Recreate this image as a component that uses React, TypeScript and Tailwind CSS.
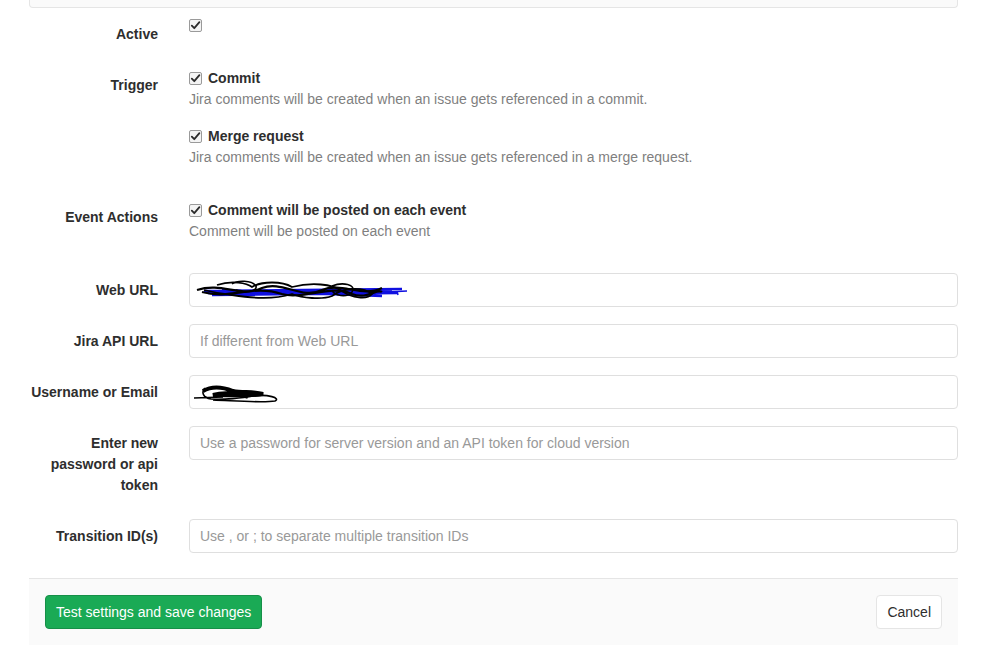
import React from "react";

const font = { fontFamily: "'Liberation Sans', Arial, sans-serif" };

function Check() {
  return (
    <span className="inline-flex items-center justify-center w-[13px] h-[13px] shrink-0 rounded-[2px] border border-[#9a9a9a] bg-[#f4f4f4]">
      <svg width="11" height="11" viewBox="0 0 11 11">
        <path d="M1.8 5.6 L4.3 8.2 L9.4 2.2" fill="none" stroke="#2b2b2b" strokeWidth="1.8" strokeLinecap="round" strokeLinejoin="round" />
      </svg>
    </span>
  );
}

function Label({ children, wide, className }: { children: React.ReactNode; wide?: boolean; className?: string }) {
  return (
    <div
      className={
        "w-[129px] shrink-0 text-right font-bold text-[14px] leading-[21px] text-[#2e2e2e] " +
        (wide ? "pl-0 " : "pl-[13px] ") +
        (className ?? "pt-[7px]")
      }
    >
      {children}
    </div>
  );
}

function CheckOption({ title, help }: { title?: string; help?: string }) {
  return (
    <div>
      <div className="flex items-center gap-[6px] h-[21px]">
        <Check />
        {title && <span className="font-bold text-[14px] text-[#2e2e2e]">{title}</span>}
      </div>
      {help && <div className="text-[14px] leading-[21px] text-[#7f7f7f]">{help}</div>}
    </div>
  );
}

function Field({ label, placeholder, children, className, wide }: { label: React.ReactNode; placeholder?: string; children?: React.ReactNode; className?: string; wide?: boolean }) {
  return (
    <div className={"flex gap-[31px] " + (className ?? "")}>
      <Label wide={wide}>{label}</Label>
      <div className="relative flex-1 h-[34px] rounded-[4px] border border-[#dfdfdf] bg-white flex items-center px-[10px]">
        {placeholder && <span className="text-[14px] text-[#999]">{placeholder}</span>}
        {children}
      </div>
    </div>
  );
}

function UrlScribble() {
  return (
    <svg width="230" height="26" viewBox="0 0 230 26" className="absolute left-[2px] top-[4px]">
      <path d="M12 13 L210 11 M16 15 L200 13 M20 17 L205 15 M30 12 L190 18" stroke="#1010e0" strokeWidth="2.5" fill="none" />
      <path d="M5 12 C30 4 50 20 70 10 C90 2 110 22 130 12 C150 4 170 20 190 10 M10 14 C40 22 60 6 90 16 C110 22 140 6 160 16 C175 22 185 10 190 14"
        stroke="#000" strokeWidth="2.2" fill="none" />
      <path d="M25 7 C40 2 55 5 60 9 C70 3 90 3 100 9 C120 4 140 6 150 13 C160 20 175 22 180 16 C170 8 150 10 140 18 C130 22 110 20 100 16 C80 22 60 20 40 17 C30 16 20 14 12 12"
        stroke="#000" strokeWidth="1.8" fill="none" />
      <path d="M40 6 C45 2 60 2 64 8 C66 14 50 16 44 12 M140 8 C150 4 165 6 160 14 C155 20 142 18 140 12" stroke="#000" strokeWidth="1.6" fill="none" />
      <path d="M195 14 L215 13 M205 13 L206 17" stroke="#1010e0" strokeWidth="1.5" fill="none" />
    </svg>
  );
}

function UserScribble() {
  return (
    <svg width="95" height="22" viewBox="0 0 95 22" className="absolute left-[3px] top-[6px]">
      <path d="M1 16 L30 15 M12 6 C8 10 10 16 18 17 C30 18 50 16 60 14 C75 12 88 16 82 19 C70 21 45 19 20 18" stroke="#000" strokeWidth="1.6" fill="none" />
      <path d="M10 9 C20 3 30 5 40 9 C50 11 60 9 70 12 C60 14 40 13 20 13 C30 10 45 11 55 15" stroke="#000" strokeWidth="4" fill="none" />
    </svg>
  );
}

export default function App() {
  return (
    <div className="bg-white w-[995px] h-[663px] overflow-hidden" style={font}>
      <div className="ml-[29px] w-[929px]">
        <div className="h-[8px] bg-[#fafafa] border-x border-b border-[#e5e5e5] rounded-b-[4px]" />

        <div className="flex gap-[31px] mt-[7px]">
          <Label className="pt-[9px] pb-[-2px] h-[28px]">Active</Label>
          <CheckOption />
        </div>

        <div className="flex gap-[31px] mt-[25px]">
          <Label>Trigger</Label>
          <div className="flex flex-col gap-[16px]">
            <CheckOption title="Commit" help="Jira comments will be created when an issue gets referenced in a commit." />
            <CheckOption title="Merge request" help="Jira comments will be created when an issue gets referenced in a merge request." />
          </div>
        </div>

        <div className="flex gap-[31px] mt-[32px]">
          <Label>Event Actions</Label>
          <CheckOption title="Comment will be posted on each event" help="Comment will be posted on each event" />
        </div>

        <Field label="Web URL" className="mt-[31px]">
          <UrlScribble />
        </Field>
        <Field label="Jira API URL" placeholder="If different from Web URL" className="mt-[17px]" />
        <Field label="Username or Email" className="mt-[17px]" wide>
          <UserScribble />
        </Field>
        <div className="flex gap-[31px] mt-[17px]">
          <Label>Enter new password or api token</Label>
          <div className="flex-1 h-[34px] rounded-[4px] border border-[#dfdfdf] bg-white flex items-center px-[10px]">
            <span className="text-[14px] text-[#999]">Use a password for server version and an API token for cloud version</span>
          </div>
        </div>
        <Field label="Transition ID(s)" placeholder="Use , or ; to separate multiple transition IDs" className="mt-[23px]" />

        <div className="mt-[25px] h-[67px] bg-[#fafafa] border-t border-[#e5e5e5] flex items-center justify-between px-[16px]">
          <button className="h-[34px] px-[10px] rounded-[4px] bg-[#1aaa55] border border-[#168f48] text-white text-[14px]">
            Test settings and save changes
          </button>
          <button className="h-[34px] px-[10px] rounded-[4px] bg-white border border-[#e5e5e5] text-[#2e2e2e] text-[14px]">
            Cancel
          </button>
        </div>
      </div>
    </div>
  );
}
